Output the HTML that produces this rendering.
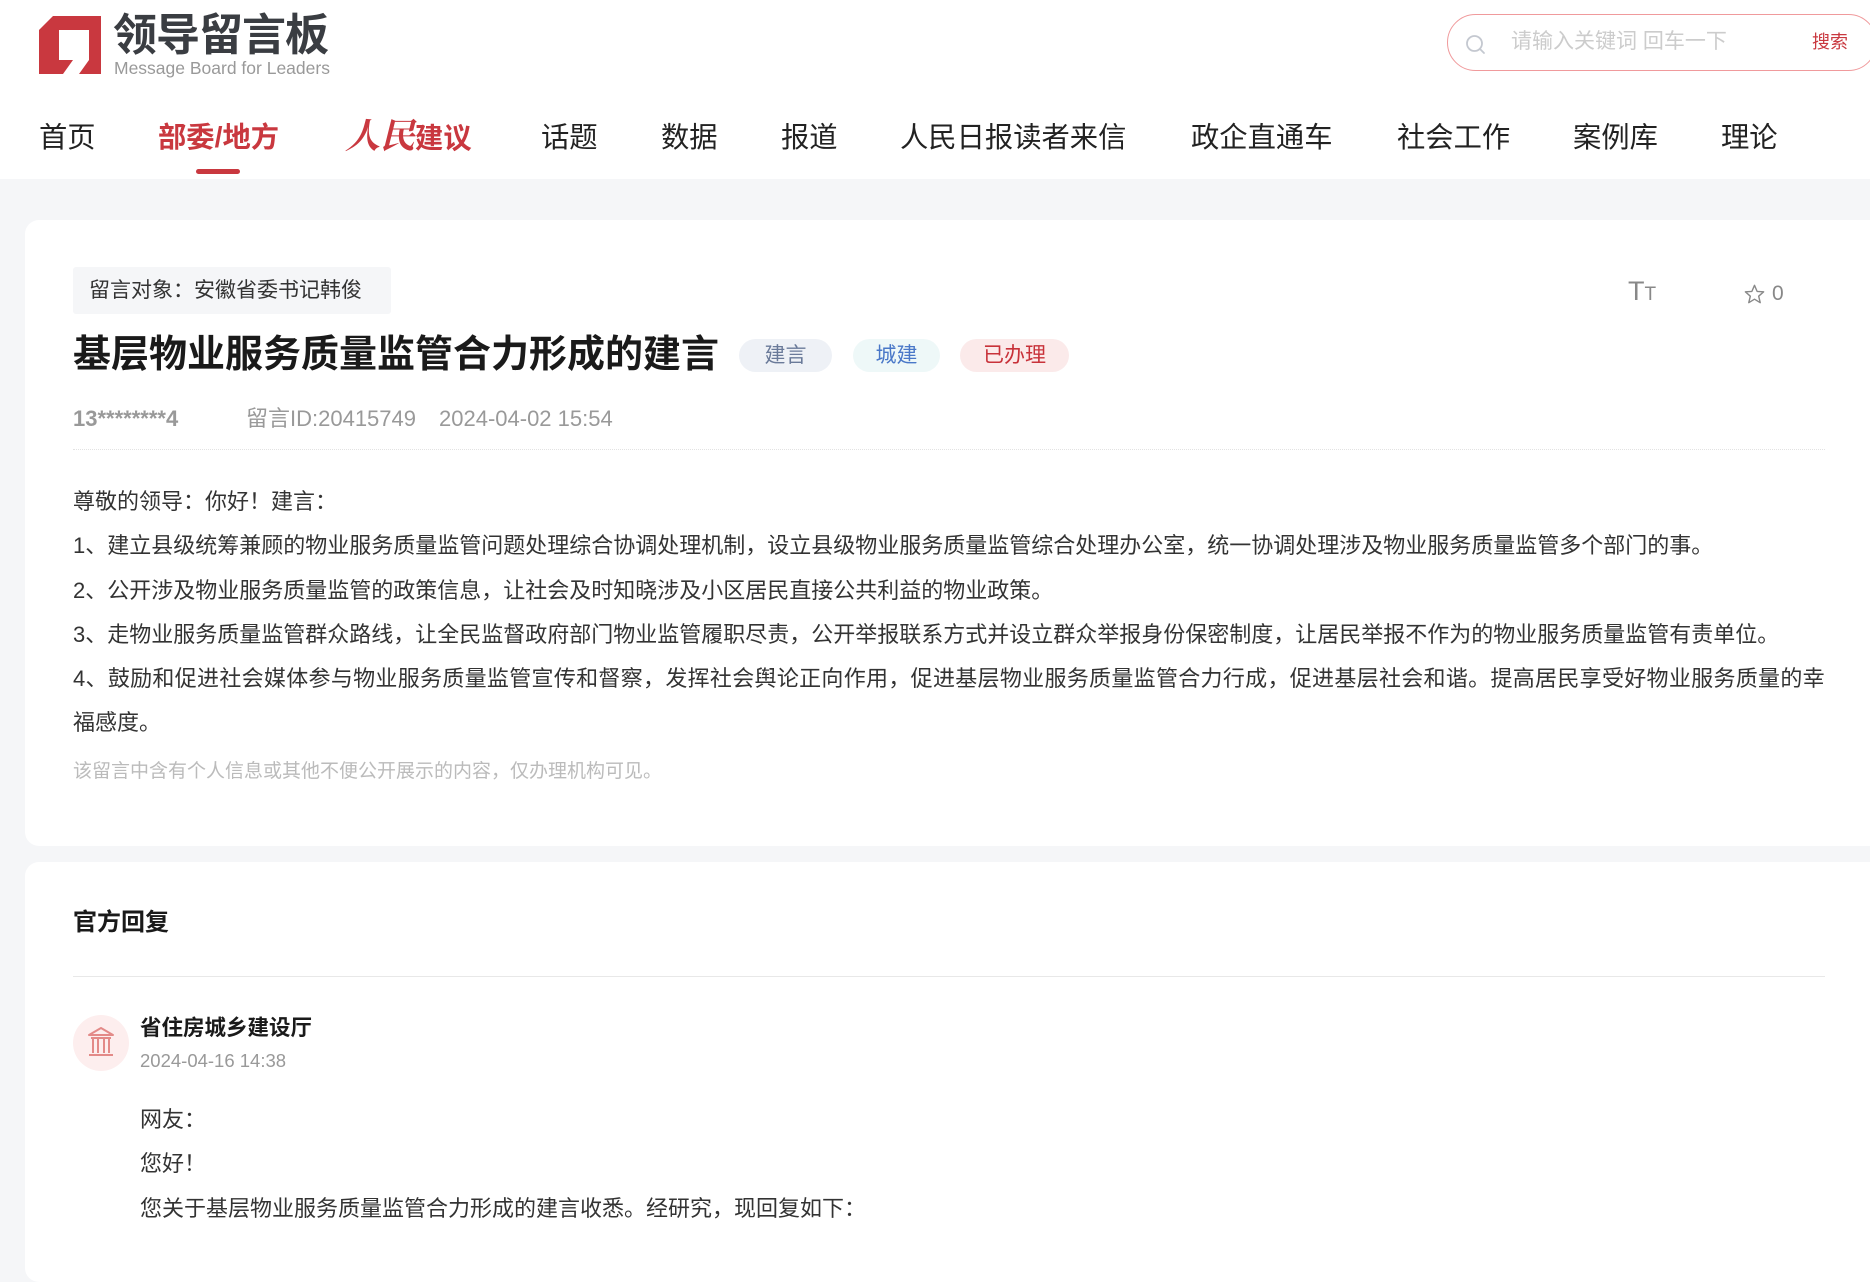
<!DOCTYPE html>
<html><head><meta charset="utf-8">
<style>
*{margin:0;padding:0;box-sizing:border-box}
body{width:1870px;height:1216px;overflow:hidden;background:#f5f6f8;font-family:"Liberation Sans","Noto Sans CJK SC",sans-serif;position:relative;color:#222}
.a{position:absolute;white-space:nowrap}
#hdr{position:absolute;left:0;top:0;width:1870px;height:179px;background:#fff}
.nav{top:117px;font-size:28.3px;line-height:40px;color:#222}
.card{position:absolute;left:25px;width:1870px;background:#fff;border-radius:14px}
.body p{font-size:22px;line-height:44.3px;color:#333;white-space:nowrap}
.tag{position:absolute;top:339px;height:33px;border-radius:17px;font-size:21px;line-height:33px;text-align:center}
</style></head><body>
<div id="hdr"></div>
<svg class="a" style="left:39px;top:16px" width="62" height="58" viewBox="0 0 62 58">
<path d="M14 0 H62 V58 H40 L50 44 H50 V14 H20 V44 H34 L24 58 H0 V14 Z" fill="#c9383f"/>
</svg>
<div class="a" style="left:113px;top:9px;font-size:44px;line-height:54px;font-weight:bold;color:#3a3d42;letter-spacing:-1px">领导留言板</div>
<div class="a" style="left:114px;top:58px;font-size:17.5px;line-height:20px;color:#999">Message Board for Leaders</div>

<div class="a" style="left:1447px;top:14px;width:430px;height:57px;border:1.5px solid #f09a9c;border-radius:29px"></div>
<svg class="a" style="left:1465px;top:34px" width="22" height="22" viewBox="0 0 22 22"><circle cx="9.5" cy="9.5" r="7.5" fill="none" stroke="#c4c8d0" stroke-width="1.8"/><path d="M15 15 L19 19" stroke="#c4c8d0" stroke-width="1.8" stroke-linecap="round"/></svg>
<div class="a" style="left:1511px;top:28px;font-size:21px;line-height:28px;color:#ccc">请输入关键词 回车一下</div>
<div class="a" style="left:1812px;top:30px;font-size:18px;line-height:24px;color:#c9383f">搜索</div>

<div class="a nav" style="left:39px">首页</div>
<div class="a nav" style="left:158px;color:#c9383f;font-weight:bold">部委/地方</div>
<div class="a" style="left:196px;top:169px;width:44px;height:5px;border-radius:3px;background:#c9383f"></div>
<div class="a nav" style="left:345px;color:#c9383f;font-weight:bold"><span style="font-family:'Liberation Serif','Noto Serif CJK SC',serif;font-style:italic;font-size:35px">人民</span>建议</div>
<div class="a nav" style="left:541px">话题</div>
<div class="a nav" style="left:661px">数据</div>
<div class="a nav" style="left:781px">报道</div>
<div class="a nav" style="left:900px">人民日报读者来信</div>
<div class="a nav" style="left:1191px">政企直通车</div>
<div class="a nav" style="left:1397px">社会工作</div>
<div class="a nav" style="left:1573px">案例库</div>
<div class="a nav" style="left:1721px">理论</div>

<div class="card" style="top:220px;height:626px"></div>
<div class="a" style="left:73px;top:267px;width:318px;height:47px;background:#f5f6f8;border-radius:3px"></div>
<div class="a" style="left:89px;top:277px;font-size:21px;line-height:28px;color:#333">留言对象：安徽省委书记韩俊</div>
<div class="a" style="left:1628px;top:276px;font-size:27px;line-height:30px;color:#888">T<span style="font-size:19px">T</span></div>
<svg class="a" style="left:1744px;top:284px" width="21" height="20" viewBox="0 0 24 23"><path d="M12 1.5 L15 8.5 L22.5 9 L16.8 14 L18.6 21.5 L12 17.5 L5.4 21.5 L7.2 14 L1.5 9 L9 8.5 Z" fill="none" stroke="#888" stroke-width="1.6" stroke-linejoin="round"/></svg>
<div class="a" style="left:1772px;top:281px;font-size:21px;line-height:26px;color:#888">0</div>

<div class="a" style="left:73px;top:330px;font-size:38px;line-height:50px;font-weight:bold;color:#1a1a1a">基层物业服务质量监管合力形成的建言</div>
<div class="tag" style="left:739px;width:93px;background:#eef1f6;color:#6a7a99">建言</div>
<div class="tag" style="left:853px;width:87px;background:#eef8f8;color:#4a78c8">城建</div>
<div class="tag" style="left:960px;width:109px;background:#fbeaea;color:#c8323a">已办理</div>

<div class="a" style="left:73px;top:406px;font-size:22px;line-height:26px;color:#999;font-weight:bold">13********4</div>
<div class="a" style="left:246px;top:406px;font-size:22px;line-height:26px;color:#999">留言ID:20415749</div>
<div class="a" style="left:439px;top:406px;font-size:22px;line-height:26px;color:#999">2024-04-02 15:54</div>
<div class="a" style="left:73px;top:449px;width:1752px;border-top:1.5px dotted #e2e2e2"></div>

<div class="a body" style="left:73px;top:480px">
<p>尊敬的领导：你好！建言：</p>
<p>1、建立县级统筹兼顾的物业服务质量监管问题处理综合协调处理机制，设立县级物业服务质量监管综合处理办公室，统一协调处理涉及物业服务质量监管多个部门的事。</p>
<p>2、公开涉及物业服务质量监管的政策信息，让社会及时知晓涉及小区居民直接公共利益的物业政策。</p>
<p>3、走物业服务质量监管群众路线，让全民监督政府部门物业监管履职尽责，公开举报联系方式并设立群众举报身份保密制度，让居民举报不作为的物业服务质量监管有责单位。</p>
<p style="letter-spacing:0.3px">4、鼓励和促进社会媒体参与物业服务质量监管宣传和督察，发挥社会舆论正向作用，促进基层物业服务质量监管合力行成，促进基层社会和谐。提高居民享受好物业服务质量的幸</p>
<p>福感度。</p>
</div>
<div class="a" style="left:73px;top:760px;font-size:19px;line-height:24px;color:#bbb">该留言中含有个人信息或其他不便公开展示的内容，仅办理机构可见。</div>

<div class="card" style="top:862px;height:420px"></div>
<div class="a" style="left:73px;top:908px;font-size:24px;line-height:30px;font-weight:bold;color:#1a1a1a">官方回复</div>
<div class="a" style="left:73px;top:976px;width:1752px;border-top:1.5px solid #e8e8e8"></div>
<div class="a" style="left:73px;top:1015px;width:56px;height:56px;border-radius:50%;background:#fdeeee"></div>
<svg class="a" style="left:86px;top:1026px" width="30" height="32" viewBox="0 0 30 32"><path d="M15 2 L27 9 H3 Z" fill="none" stroke="#e38a88" stroke-width="2" stroke-linejoin="round"/><path d="M5 12 H25 M7 12 V27 M12 12 V27 M18 12 V27 M23 12 V27 M3 29 H27" stroke="#e38a88" stroke-width="2" fill="none"/></svg>
<div class="a" style="left:140px;top:1014px;font-size:21.5px;line-height:28px;font-weight:bold;color:#1a1a1a">省住房城乡建设厅</div>
<div class="a" style="left:140px;top:1049px;font-size:18.5px;line-height:24px;color:#999">2024-04-16 14:38</div>
<div class="a body" style="left:140px;top:1098px">
<p>网友：</p>
<p>您好！</p>
<p>您关于基层物业服务质量监管合力形成的建言收悉。经研究，现回复如下：</p>
</div>
</body></html>
